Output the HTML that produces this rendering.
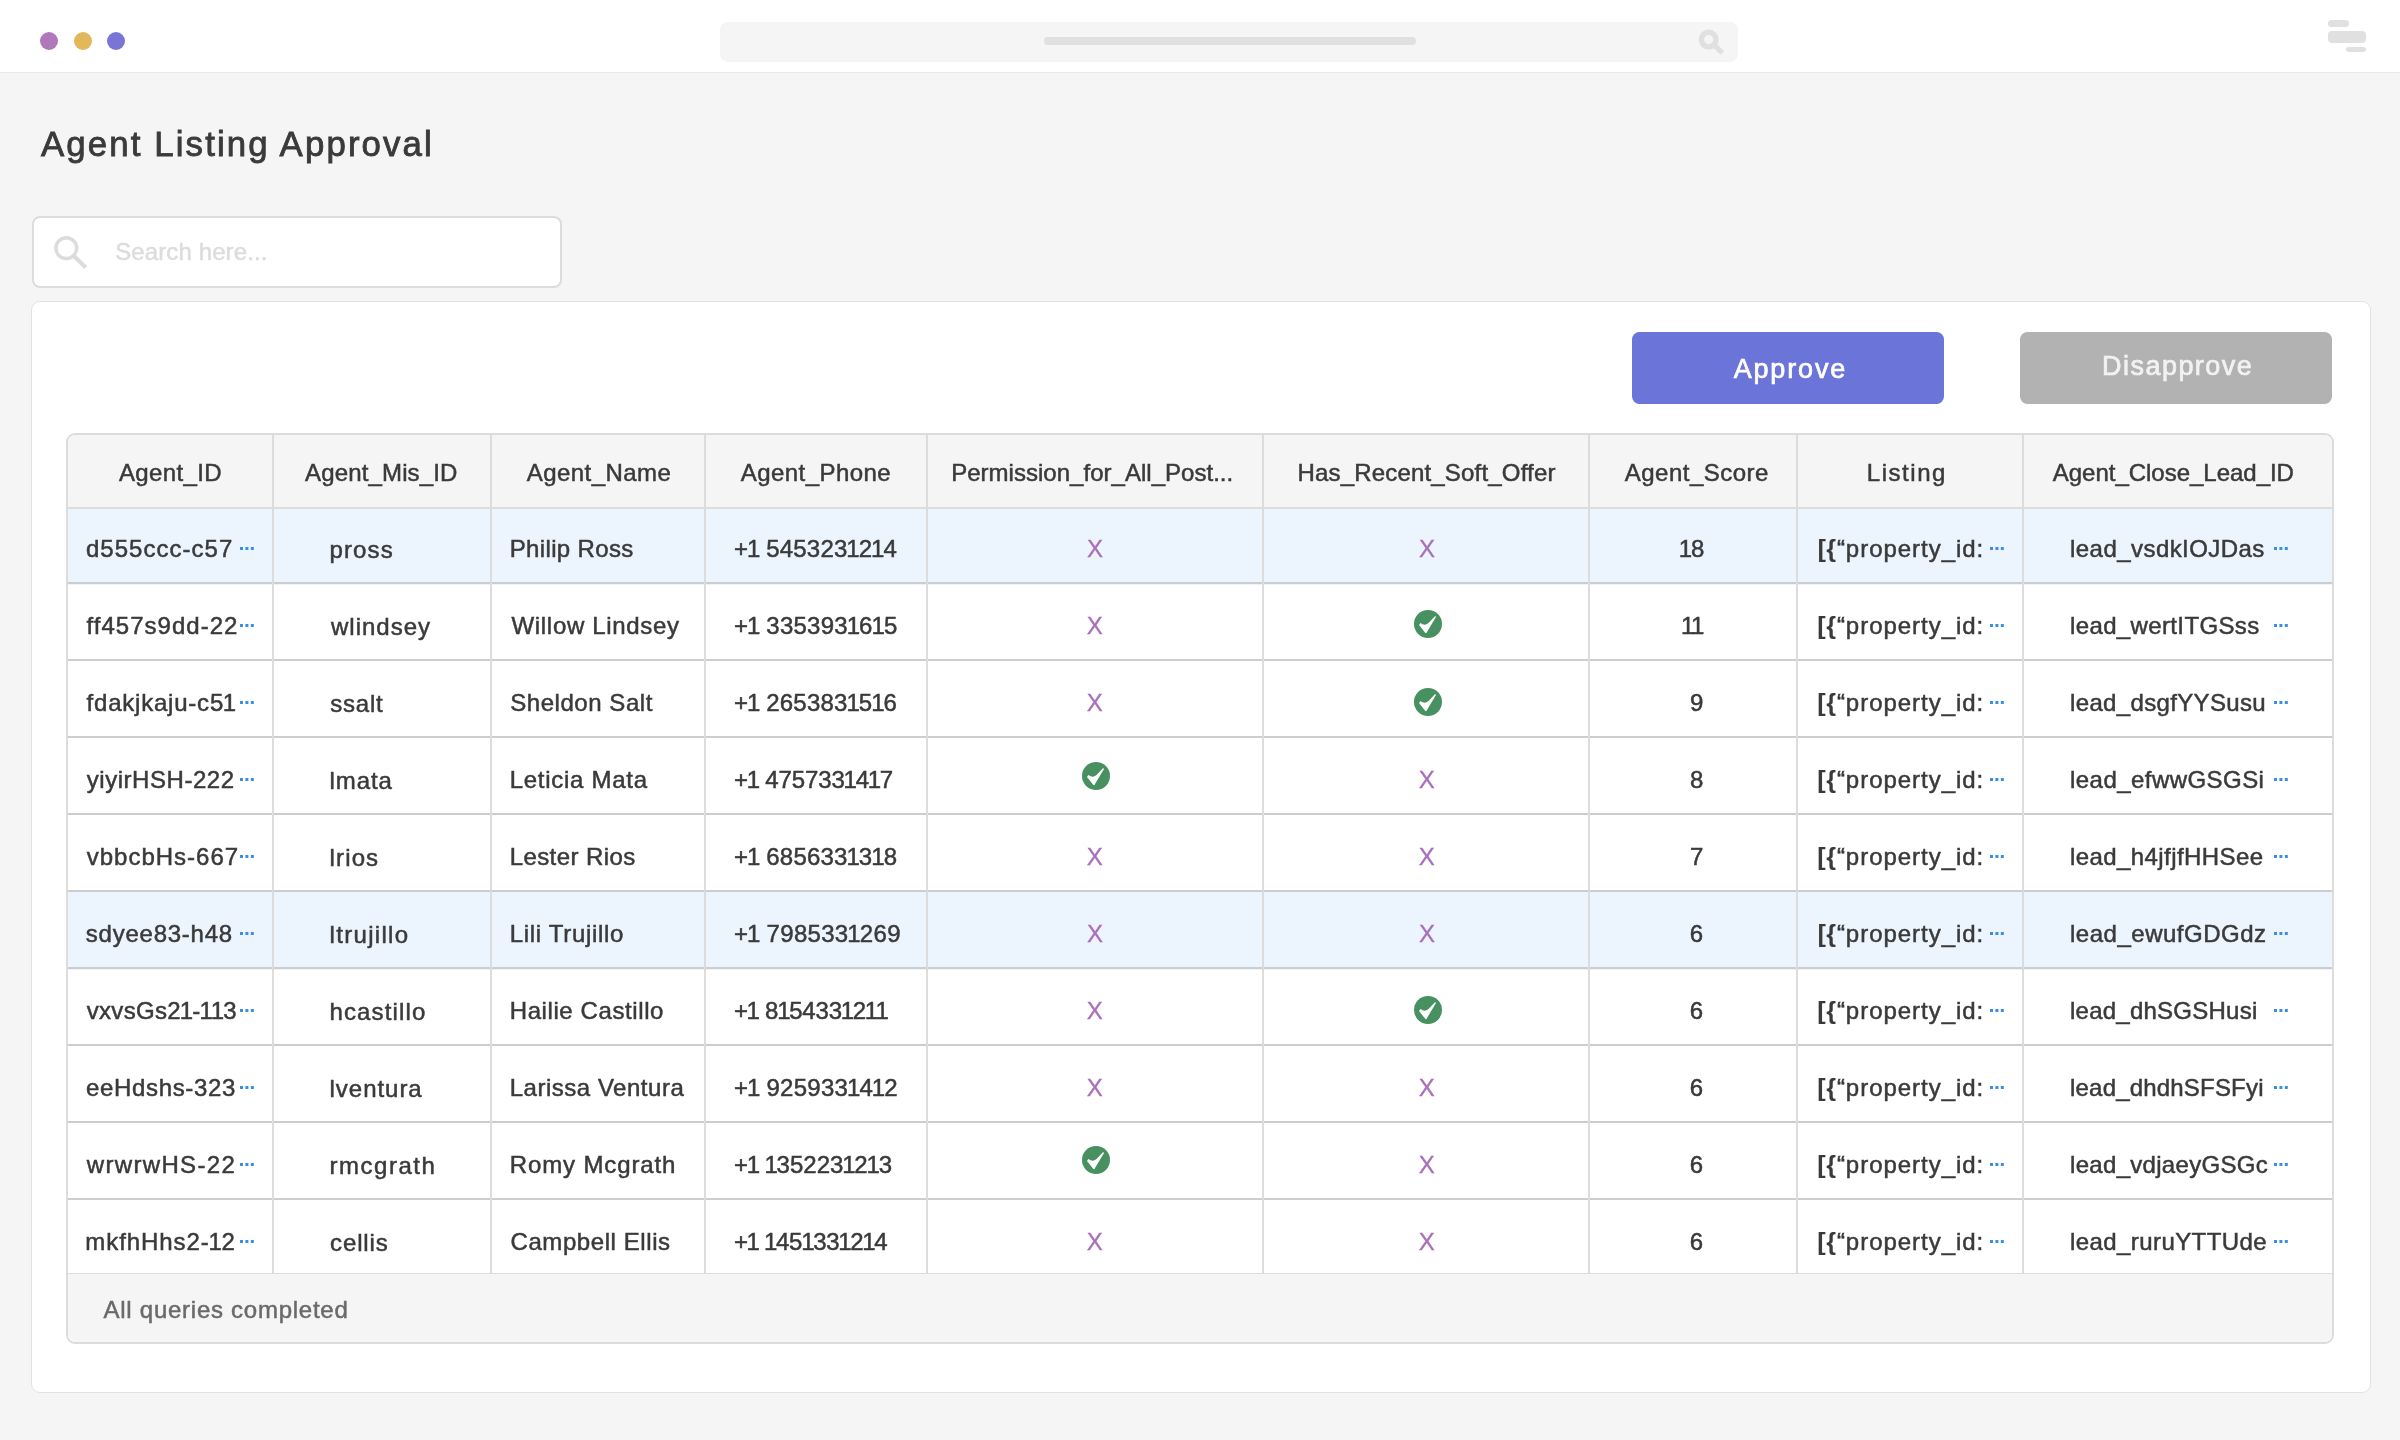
<!DOCTYPE html>
<html lang="en"><head><meta charset="utf-8"><title>Agent Listing Approval</title>
<style>

*{box-sizing:border-box;margin:0;padding:0}
html,body{width:2400px;height:1440px;overflow:hidden;background:#f5f5f5}
body{position:relative;font-family:"Liberation Sans", sans-serif;color:#3a3a3a;font-size:24px;-webkit-text-stroke:0.5px currentColor}
.abs{position:absolute}
.topbar{left:0;top:0;width:2400px;height:73px;background:#fff;border-bottom:1px solid #e9e9e9}
.dot{width:18px;height:18px;border-radius:50%;top:32px}
.addr{left:720px;top:22px;width:1018px;height:40px;background:#f5f5f5;border-radius:8px}
.addrline{left:1044px;top:37px;width:372px;height:8px;border-radius:4px;background:#e0e0e0}
.title{font-size:34.8px;color:#3a3a3a;-webkit-text-stroke:0.85px currentColor}
.search{left:32px;top:216px;width:530px;height:72px;background:#fff;border:2px solid #dcdcdc;border-radius:8px}
.ph{font-size:24px;color:#dcdcdc}
.card{left:31px;top:301px;width:2340px;height:1092px;background:#fff;border:1px solid #e2e2e2;border-radius:9px}
.btn{top:332px;width:312px;height:72px;border-radius:7.5px}
.approve{left:1632px;background:#6b74d8}
.disapprove{left:2020px;background:#b2b2b2}
.bt{font-size:27px;color:#fff;-webkit-text-stroke:0.7px currentColor}
.table{left:66px;top:433px;width:2268px;height:911px;border:2px solid #dcdcdc;border-radius:9px;background:#fff;overflow:hidden}
.thead{left:0;top:0;width:2264px;height:72px;background:#f5f5f5}
.hl{left:0;width:2264px;background:#ecf4fe}
.foot{left:0;top:838px;width:2264px;height:70px;background:#f5f5f5;border-top:1px solid #dcdcdc}
.vl{width:2px;background:#dcdcdc;top:0;height:838px}
.hline{left:0;width:2264px;height:2px;background:#d0d0d0}
.t{white-space:nowrap;line-height:30px;height:30px}
.x{color:#a96fba;-webkit-text-stroke:0.3px #a96fba}
.ck{position:absolute;display:block}
.dd{width:2.9px;height:2.8px;background:#3b8fe2;box-shadow:5.4px 0 0 #3b8fe2,10.8px 0 0 #3b8fe2}
.ftxt{color:#6a6a6a}
.btd{color:#f2f2f2}
.o{margin:0 -1.2px}
b{font-weight:700;-webkit-text-stroke:0.2px currentColor}

</style></head><body><div id="root" style="position:absolute;left:0;top:0;width:2400px;height:1440px;will-change:transform">
<div class="abs topbar"></div>
<div class="abs dot" style="left:40px;background:#ae78bb"></div>
<div class="abs dot" style="left:73.5px;background:#e3b85b"></div>
<div class="abs dot" style="left:107px;background:#7a74d6"></div>
<div class="abs addr"></div><div class="abs addrline"></div>
<svg class="abs" style="left:1690px;top:20px" width="44" height="44" viewBox="1690 20 44 44"><circle cx="1708.7" cy="39.6" r="7.3" fill="none" stroke="#e0e0e0" stroke-width="5.4"/><path d="M1713.2 44.1 L1722.3 52.8" stroke="#e0e0e0" stroke-width="5.2"/></svg>
<div class="abs" style="left:2328px;top:20px;width:21px;height:7px;border-radius:3.5px;background:#e0e0e0"></div>
<div class="abs" style="left:2328px;top:31px;width:38px;height:12px;border-radius:4px;background:#e0e0e0"></div>
<div class="abs" style="left:2346px;top:47px;width:20px;height:5px;border-radius:2.5px;background:#e0e0e0"></div>
<div class="abs t title" id="title" style="left:40.96px;top:128.94px;letter-spacing:2.122px">Agent Listing Approval</div>
<div class="abs search"></div>
<svg class="abs" style="left:50px;top:232px" width="40" height="40" viewBox="0 0 40 40"><circle cx="16.3" cy="16.2" r="10.4" fill="none" stroke="#dcdcdc" stroke-width="3.6"/><path d="M24.4 24.4 L35.8 35.6" stroke="#dcdcdc" stroke-width="4.2"/></svg>
<div class="abs t ph" id="ph" style="left:115.20px;top:236.68px;letter-spacing:0.112px">Search here...</div>
<div class="abs card"></div>
<div class="abs btn approve"></div>
<div class="abs btn disapprove"></div>
<div class="abs t bt" id="bta" style="left:1733.64px;top:353.54px;letter-spacing:1.847px">Approve</div>
<div class="abs t bt btd" id="btd" style="left:2101.96px;top:351.44px;letter-spacing:1.479px">Disapprove</div>
<div class="abs table">
<div class="abs thead"></div>
<div class="abs hl" style="top:74px;height:76px"></div>
<div class="abs hl" style="top:457px;height:78px"></div>
<div class="abs foot"></div>
<div class="abs hline" style="top:72px;background:#dcdcdc"></div>
<div class="abs hline" style="top:147px;background:#cdcdcd"></div>
<div class="abs hline" style="top:224px;background:#cdcdcd"></div>
<div class="abs hline" style="top:301px;background:#cdcdcd"></div>
<div class="abs hline" style="top:378px;background:#cdcdcd"></div>
<div class="abs hline" style="top:455px;background:#cdcdcd"></div>
<div class="abs hline" style="top:532px;background:#cdcdcd"></div>
<div class="abs hline" style="top:609px;background:#cdcdcd"></div>
<div class="abs hline" style="top:686px;background:#cdcdcd"></div>
<div class="abs hline" style="top:763px;background:#cdcdcd"></div>
<div class="abs vl" style="left:204px"></div>
<div class="abs vl" style="left:422px"></div>
<div class="abs vl" style="left:636px"></div>
<div class="abs vl" style="left:858px"></div>
<div class="abs vl" style="left:1194px"></div>
<div class="abs vl" style="left:1520px"></div>
<div class="abs vl" style="left:1728px"></div>
<div class="abs vl" style="left:1954px"></div>
<div class="abs t th" id="h0" style="left:50.99px;top:22.98px;letter-spacing:0.350px">Agent_ID</div>
<div class="abs t th" id="h1" style="left:237.00px;top:22.98px;letter-spacing:0.154px">Agent_Mis_ID</div>
<div class="abs t th" id="h2" style="left:458.84px;top:22.98px;letter-spacing:0.433px">Agent_Name</div>
<div class="abs t th" id="h3" style="left:672.77px;top:22.98px;letter-spacing:0.440px">Agent_Phone</div>
<div class="abs t th" id="h4" style="left:883.16px;top:22.98px;letter-spacing:0.025px">Permission_for_All_Post...</div>
<div class="abs t th" id="h5" style="left:1229.52px;top:22.98px;letter-spacing:0.176px">Has_Recent_Soft_Offer</div>
<div class="abs t th" id="h6" style="left:1556.77px;top:22.98px;letter-spacing:0.485px">Agent_Score</div>
<div class="abs t th" id="h7" style="left:1798.86px;top:22.98px;letter-spacing:1.524px">Listing</div>
<div class="abs t th" id="h8" style="left:1984.77px;top:22.98px;letter-spacing:-0.018px">Agent_Close_Lead_ID</div>
<div class="abs t " id="a0" style="left:17.93px;top:98.58px;letter-spacing:1.031px">d555ccc-c57</div>
<div class="abs dd" style="left:171.7px;top:112.1px"></div>
<div class="abs t " id="b0" style="left:261.45px;top:99.58px;letter-spacing:1.135px">pross</div>
<div class="abs t " id="c0" style="left:441.72px;top:98.58px;letter-spacing:0.352px">Philip Ross</div>
<div class="abs t " id="d0" style="left:665.96px;top:98.58px;letter-spacing:0.197px">+<span class="o">1</span> 545323<span class="o">1</span>2<span class="o">1</span>4</div>
<div class="abs t x" id="x0_0" style="left:1018.88px;top:98.58px;letter-spacing:0.000px">X</div>
<div class="abs t x" id="x1_0" style="left:1350.89px;top:98.58px;letter-spacing:0.000px">X</div>
<div class="abs t " id="e0" style="left:1611.98px;top:98.58px;letter-spacing:0.060px"><span class="o">1</span>8</div>
<div class="abs t " id="f0" style="left:1749.63px;top:98.58px;letter-spacing:0.968px"><b>[{</b>“property_id:</div>
<div class="abs dd" style="left:1922.1px;top:112.1px"></div>
<div class="abs t " id="g0" style="left:2002.04px;top:98.58px;letter-spacing:0.446px">lead_vsdkIOJDas</div>
<div class="abs dd" style="left:2205.9px;top:112.1px"></div>
<div class="abs t " id="a1" style="left:18.57px;top:175.58px;letter-spacing:1.018px">ff457s9dd-22</div>
<div class="abs dd" style="left:171.7px;top:189.1px"></div>
<div class="abs t " id="b1" style="left:262.96px;top:176.58px;letter-spacing:1.009px">wlindsey</div>
<div class="abs t " id="c1" style="left:443.51px;top:175.58px;letter-spacing:0.682px">Willow Lindsey</div>
<div class="abs t " id="d1" style="left:665.95px;top:175.58px;letter-spacing:0.240px">+<span class="o">1</span> 335393<span class="o">1</span>6<span class="o">1</span>5</div>
<div class="abs t x" id="x0_1" style="left:1018.86px;top:175.58px;letter-spacing:0.000px">X</div>
<svg class="ck" style="left:1346.1px;top:174.9px" width="28" height="28" viewBox="0 0 28 28"><circle cx="14" cy="14" r="14" fill="#47905f"/><path d="M5 14.9 L6.5 13.1 Q10.6 16.4 14.5 13.1 L20.9 6.2 Q21.7 5.9 22 6.9 L12.4 23 Q11.8 23.4 11.2 22.8 Z" fill="#fff"/></svg>
<div class="abs t " id="e1" style="left:1614.19px;top:175.58px;letter-spacing:-1.000px"><span class="o">1</span><span class="o">1</span></div>
<div class="abs t " id="f1" style="left:1749.62px;top:175.58px;letter-spacing:0.970px"><b>[{</b>“property_id:</div>
<div class="abs dd" style="left:1922.1px;top:189.1px"></div>
<div class="abs t " id="g1" style="left:2002.04px;top:175.58px;letter-spacing:0.363px">lead_wertITGSss</div>
<div class="abs dd" style="left:2205.9px;top:189.1px"></div>
<div class="abs t " id="a2" style="left:18.57px;top:252.58px;letter-spacing:0.783px">fdakjkaju-c5<span class="o">1</span></div>
<div class="abs dd" style="left:171.7px;top:266.1px"></div>
<div class="abs t " id="b2" style="left:262.22px;top:253.58px;letter-spacing:0.772px">ssalt</div>
<div class="abs t " id="c2" style="left:442.27px;top:252.58px;letter-spacing:0.540px">Sheldon Salt</div>
<div class="abs t " id="d2" style="left:665.95px;top:252.58px;letter-spacing:0.212px">+<span class="o">1</span> 265383<span class="o">1</span>5<span class="o">1</span>6</div>
<div class="abs t x" id="x0_2" style="left:1018.86px;top:252.58px;letter-spacing:0.000px">X</div>
<svg class="ck" style="left:1346.1px;top:253.0px" width="28" height="28" viewBox="0 0 28 28"><circle cx="14" cy="14" r="14" fill="#47905f"/><path d="M5 14.9 L6.5 13.1 Q10.6 16.4 14.5 13.1 L20.9 6.2 Q21.7 5.9 22 6.9 L12.4 23 Q11.8 23.4 11.2 22.8 Z" fill="#fff"/></svg>
<div class="abs t " id="e2" style="left:1621.90px;top:252.58px;letter-spacing:0.000px">9</div>
<div class="abs t " id="f2" style="left:1749.62px;top:252.58px;letter-spacing:0.970px"><b>[{</b>“property_id:</div>
<div class="abs dd" style="left:1922.1px;top:266.1px"></div>
<div class="abs t " id="g2" style="left:2002.04px;top:252.58px;letter-spacing:0.348px">lead_dsgfYYSusu</div>
<div class="abs dd" style="left:2205.9px;top:266.1px"></div>
<div class="abs t " id="a3" style="left:18.72px;top:329.58px;letter-spacing:0.545px">yiyirHSH-222</div>
<div class="abs dd" style="left:171.7px;top:343.1px"></div>
<div class="abs t " id="b3" style="left:261.57px;top:330.58px;letter-spacing:0.895px">lmata</div>
<div class="abs t " id="c3" style="left:441.72px;top:329.58px;letter-spacing:0.721px">Leticia Mata</div>
<div class="abs t " id="d3" style="left:665.95px;top:329.58px;letter-spacing:-0.100px">+<span class="o">1</span> 475733<span class="o">1</span>4<span class="o">1</span>7</div>
<svg class="ck" style="left:1014.0px;top:327.0px" width="28" height="28" viewBox="0 0 28 28"><circle cx="14" cy="14" r="14" fill="#47905f"/><path d="M5 14.9 L6.5 13.1 Q10.6 16.4 14.5 13.1 L20.9 6.2 Q21.7 5.9 22 6.9 L12.4 23 Q11.8 23.4 11.2 22.8 Z" fill="#fff"/></svg>
<div class="abs t x" id="x1_3" style="left:1350.87px;top:329.58px;letter-spacing:0.000px">X</div>
<div class="abs t " id="e3" style="left:1622.06px;top:329.58px;letter-spacing:0.000px">8</div>
<div class="abs t " id="f3" style="left:1749.62px;top:329.58px;letter-spacing:0.970px"><b>[{</b>“property_id:</div>
<div class="abs dd" style="left:1922.1px;top:343.1px"></div>
<div class="abs t " id="g3" style="left:2002.04px;top:329.58px;letter-spacing:0.446px">lead_efwwGSGSi</div>
<div class="abs dd" style="left:2205.9px;top:343.1px"></div>
<div class="abs t " id="a4" style="left:18.72px;top:406.58px;letter-spacing:1.000px">vbbcbHs-667</div>
<div class="abs dd" style="left:171.7px;top:420.1px"></div>
<div class="abs t " id="b4" style="left:261.57px;top:407.58px;letter-spacing:1.138px">lrios</div>
<div class="abs t " id="c4" style="left:441.72px;top:406.58px;letter-spacing:0.403px">Lester Rios</div>
<div class="abs t " id="d4" style="left:665.95px;top:406.58px;letter-spacing:0.218px">+<span class="o">1</span> 685633<span class="o">1</span>3<span class="o">1</span>8</div>
<div class="abs t x" id="x0_4" style="left:1018.86px;top:406.58px;letter-spacing:0.000px">X</div>
<div class="abs t x" id="x1_4" style="left:1350.87px;top:406.58px;letter-spacing:0.000px">X</div>
<div class="abs t " id="e4" style="left:1621.94px;top:406.58px;letter-spacing:0.000px">7</div>
<div class="abs t " id="f4" style="left:1749.62px;top:406.58px;letter-spacing:0.970px"><b>[{</b>“property_id:</div>
<div class="abs dd" style="left:1922.1px;top:420.1px"></div>
<div class="abs t " id="g4" style="left:2002.04px;top:406.58px;letter-spacing:0.415px">lead_h4jfjfHHSee</div>
<div class="abs dd" style="left:2205.9px;top:420.1px"></div>
<div class="abs t " id="a5" style="left:17.84px;top:483.58px;letter-spacing:0.754px">sdyee83-h48</div>
<div class="abs dd" style="left:171.7px;top:497.1px"></div>
<div class="abs t " id="b5" style="left:261.57px;top:484.58px;letter-spacing:1.314px">ltrujillo</div>
<div class="abs t " id="c5" style="left:441.72px;top:483.58px;letter-spacing:0.697px">Lili Trujillo</div>
<div class="abs t " id="d5" style="left:665.96px;top:483.58px;letter-spacing:0.312px">+<span class="o">1</span> 798533<span class="o">1</span>269</div>
<div class="abs t x" id="x0_5" style="left:1018.88px;top:483.58px;letter-spacing:0.000px">X</div>
<div class="abs t x" id="x1_5" style="left:1350.89px;top:483.58px;letter-spacing:0.000px">X</div>
<div class="abs t " id="e5" style="left:1621.78px;top:483.58px;letter-spacing:0.000px">6</div>
<div class="abs t " id="f5" style="left:1749.63px;top:483.58px;letter-spacing:0.968px"><b>[{</b>“property_id:</div>
<div class="abs dd" style="left:1922.1px;top:497.1px"></div>
<div class="abs t " id="g5" style="left:2002.04px;top:483.58px;letter-spacing:0.511px">lead_ewufGDGdz</div>
<div class="abs dd" style="left:2205.9px;top:497.1px"></div>
<div class="abs t " id="a6" style="left:18.72px;top:560.58px;letter-spacing:0.328px">vxvsGs2<span class="o">1</span>-<span class="o">1</span><span class="o">1</span>3</div>
<div class="abs dd" style="left:171.7px;top:574.1px"></div>
<div class="abs t " id="b6" style="left:261.49px;top:561.58px;letter-spacing:1.143px">hcastillo</div>
<div class="abs t " id="c6" style="left:441.72px;top:560.58px;letter-spacing:0.593px">Hailie Castillo</div>
<div class="abs t " id="d6" style="left:665.95px;top:560.58px;letter-spacing:-0.163px">+<span class="o">1</span> 8<span class="o">1</span>5433<span class="o">1</span>2<span class="o">1</span><span class="o">1</span></div>
<div class="abs t x" id="x0_6" style="left:1018.86px;top:560.58px;letter-spacing:0.000px">X</div>
<svg class="ck" style="left:1346.1px;top:561.0px" width="28" height="28" viewBox="0 0 28 28"><circle cx="14" cy="14" r="14" fill="#47905f"/><path d="M5 14.9 L6.5 13.1 Q10.6 16.4 14.5 13.1 L20.9 6.2 Q21.7 5.9 22 6.9 L12.4 23 Q11.8 23.4 11.2 22.8 Z" fill="#fff"/></svg>
<div class="abs t " id="e6" style="left:1621.80px;top:560.58px;letter-spacing:0.000px">6</div>
<div class="abs t " id="f6" style="left:1749.62px;top:560.58px;letter-spacing:0.970px"><b>[{</b>“property_id:</div>
<div class="abs dd" style="left:1922.1px;top:574.1px"></div>
<div class="abs t " id="g6" style="left:2002.04px;top:560.58px;letter-spacing:0.236px">lead_dhSGSHusi</div>
<div class="abs dd" style="left:2205.9px;top:574.1px"></div>
<div class="abs t " id="a7" style="left:17.90px;top:637.58px;letter-spacing:0.679px">eeHdshs-323</div>
<div class="abs dd" style="left:171.7px;top:651.1px"></div>
<div class="abs t " id="b7" style="left:261.57px;top:638.58px;letter-spacing:0.962px">lventura</div>
<div class="abs t " id="c7" style="left:441.72px;top:637.58px;letter-spacing:0.518px">Larissa Ventura</div>
<div class="abs t " id="d7" style="left:665.95px;top:637.58px;letter-spacing:0.273px">+<span class="o">1</span> 925933<span class="o">1</span>4<span class="o">1</span>2</div>
<div class="abs t x" id="x0_7" style="left:1018.86px;top:637.58px;letter-spacing:0.000px">X</div>
<div class="abs t x" id="x1_7" style="left:1350.87px;top:637.58px;letter-spacing:0.000px">X</div>
<div class="abs t " id="e7" style="left:1621.80px;top:637.58px;letter-spacing:0.000px">6</div>
<div class="abs t " id="f7" style="left:1749.62px;top:637.58px;letter-spacing:0.970px"><b>[{</b>“property_id:</div>
<div class="abs dd" style="left:1922.1px;top:651.1px"></div>
<div class="abs t " id="g7" style="left:2002.04px;top:637.58px;letter-spacing:0.192px">lead_dhdhSFSFyi</div>
<div class="abs dd" style="left:2205.9px;top:651.1px"></div>
<div class="abs t " id="a8" style="left:18.76px;top:714.58px;letter-spacing:1.340px">wrwrwHS-22</div>
<div class="abs dd" style="left:171.7px;top:728.1px"></div>
<div class="abs t " id="b8" style="left:261.58px;top:715.58px;letter-spacing:1.509px">rmcgrath</div>
<div class="abs t " id="c8" style="left:441.72px;top:714.58px;letter-spacing:0.881px">Romy Mcgrath</div>
<div class="abs t " id="d8" style="left:665.95px;top:714.58px;letter-spacing:-0.003px">+<span class="o">1</span> <span class="o">1</span>35223<span class="o">1</span>2<span class="o">1</span>3</div>
<svg class="ck" style="left:1014.0px;top:710.8px" width="28" height="28" viewBox="0 0 28 28"><circle cx="14" cy="14" r="14" fill="#47905f"/><path d="M5 14.9 L6.5 13.1 Q10.6 16.4 14.5 13.1 L20.9 6.2 Q21.7 5.9 22 6.9 L12.4 23 Q11.8 23.4 11.2 22.8 Z" fill="#fff"/></svg>
<div class="abs t x" id="x1_8" style="left:1350.87px;top:714.58px;letter-spacing:0.000px">X</div>
<div class="abs t " id="e8" style="left:1621.80px;top:714.58px;letter-spacing:0.000px">6</div>
<div class="abs t " id="f8" style="left:1749.62px;top:714.58px;letter-spacing:0.970px"><b>[{</b>“property_id:</div>
<div class="abs dd" style="left:1922.1px;top:728.1px"></div>
<div class="abs t " id="g8" style="left:2002.04px;top:714.58px;letter-spacing:0.305px">lead_vdjaeyGSGc</div>
<div class="abs dd" style="left:2205.9px;top:728.1px"></div>
<div class="abs t " id="a9" style="left:17.35px;top:791.58px;letter-spacing:0.911px">mkfhHhs2-<span class="o">1</span>2</div>
<div class="abs dd" style="left:171.7px;top:805.1px"></div>
<div class="abs t " id="b9" style="left:262.10px;top:792.58px;letter-spacing:0.844px">cellis</div>
<div class="abs t " id="c9" style="left:442.47px;top:791.58px;letter-spacing:0.580px">Campbell Ellis</div>
<div class="abs t " id="d9" style="left:665.95px;top:791.58px;letter-spacing:-0.161px">+<span class="o">1</span> <span class="o">1</span>45<span class="o">1</span>33<span class="o">1</span>2<span class="o">1</span>4</div>
<div class="abs t x" id="x0_9" style="left:1018.86px;top:791.58px;letter-spacing:0.000px">X</div>
<div class="abs t x" id="x1_9" style="left:1350.87px;top:791.58px;letter-spacing:0.000px">X</div>
<div class="abs t " id="e9" style="left:1621.80px;top:791.58px;letter-spacing:0.000px">6</div>
<div class="abs t " id="f9" style="left:1749.62px;top:791.58px;letter-spacing:0.970px"><b>[{</b>“property_id:</div>
<div class="abs dd" style="left:1922.1px;top:805.1px"></div>
<div class="abs t " id="g9" style="left:2002.04px;top:791.58px;letter-spacing:0.416px">lead_ruruYTTUde</div>
<div class="abs dd" style="left:2205.9px;top:805.1px"></div>
<div class="abs t ftxt" id="foot" style="left:35.54px;top:859.98px;letter-spacing:0.738px">All queries completed</div>
</div>
</div></body></html>
